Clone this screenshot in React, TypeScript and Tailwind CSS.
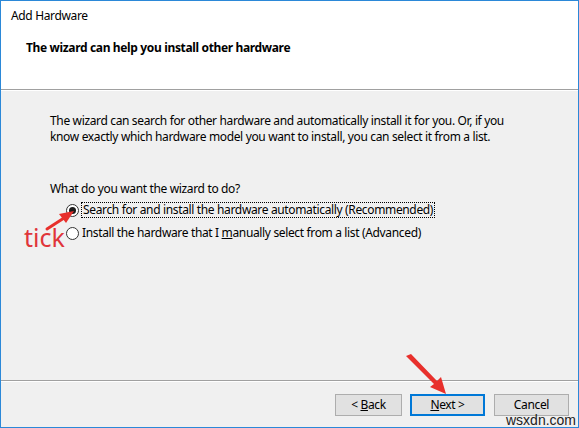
import React from "react";

const font = { fontFamily: '"Noto Sans", "Open Sans", sans-serif' };

function Radio({ checked }: { checked?: boolean }) {
  return (
    <span className="w-[13px] h-[13px] rounded-full border border-[#333] bg-white flex items-center justify-center shrink-0">
      {checked && <span className="w-[7px] h-[7px] rounded-full bg-[#1a1a1a]" />}
    </span>
  );
}

export default function App() {
  return (
    <div className="w-[579px] h-[428px] bg-white relative overflow-hidden tracking-[-0.35px]" style={font}>
      <div className="w-[579px] h-[428px] border border-[#2b88d8] flex flex-col bg-[#f0f0f0]">
        <div className="h-[88px] bg-white flex flex-col">
          <div className="pl-[10px] pt-[7px] text-[12px] leading-[16px] text-black">Add Hardware</div>
          <div className="pl-[25px] pt-[16px] text-[12px] leading-[16px] font-bold text-black">
            The wizard can help you install other hardware
          </div>
        </div>
        <div className="h-px bg-[#a0a0a0]" />
        <div className="h-px bg-white" />
        <div className="flex-1 flex flex-col">
          <div className="pl-[49px] pt-[22px] text-[12px] leading-[16px] text-black">
            <p>The wizard can search for other hardware and automatically install it for you. Or, if you</p>
            <p>know exactly which hardware model you want to install, you can select it from a list.</p>
            <p className="mt-[36px]">What do you want the wizard to do?</p>
            <div className="mt-[5px] ml-[16px] flex flex-col gap-[7px]">
              <div className="flex items-center gap-[2px] h-[16px]">
                <Radio checked />
                <span className="border border-dotted border-black px-[1px] leading-[14px]">
                  Search for and install the hardware automatically (Recommended)
                </span>
              </div>
              <div className="flex items-center gap-[3px] h-[16px]">
                <Radio />
                <span>
                  Install the hardware that I <u>m</u>anually select from a list (Advanced)
                </span>
              </div>
            </div>
          </div>
          <div className="flex-1" />
          <div className="h-px bg-[#a0a0a0]" />
          <div className="h-px bg-white" />
          <div className="h-[45px] flex items-start justify-end pr-[9px] pt-[12px]">
            <button className="w-[67px] h-[22px] bg-[#e1e1e1] border border-[#adadad] text-[12px] text-black">
              &lt; <u>B</u>ack
            </button>
            <button className="ml-[8px] w-[75px] h-[22px] bg-[#e1e1e1] border-2 border-[#0078d7] text-[12px] text-black">
              <u>N</u>ext &gt;
            </button>
            <button className="ml-[9px] w-[75px] h-[22px] bg-[#e1e1e1] border border-[#adadad] text-[12px] text-black leading-[14px]">
              Cancel
            </button>
          </div>
        </div>
      </div>

      <div className="absolute left-[506px] top-[412px] text-[14px] leading-[16px] text-[#222] tracking-normal" style={{ fontFamily: '"Liberation Sans", sans-serif' }}>
        wsxdn.com
      </div>

      <div className="absolute left-[24px] top-[222px] text-[25px] leading-[30px] text-[#e0353a] tracking-normal" style={{ fontFamily: '"Noto Sans", sans-serif' }}>
        tick
      </div>

      <svg className="absolute left-0 top-0" width="579" height="428" viewBox="0 0 579 428">
        <line x1="47" y1="229" x2="64" y2="218" stroke="#e8302c" strokeWidth="3" strokeLinecap="round" />
        <polygon points="74,211 59,214 66,223" fill="#e8302c" />
        <polygon points="406,356 411,354 437,381 441,377 446,394 430,387 434,384" fill="#e8302c" />
      </svg>
    </div>
  );
}
